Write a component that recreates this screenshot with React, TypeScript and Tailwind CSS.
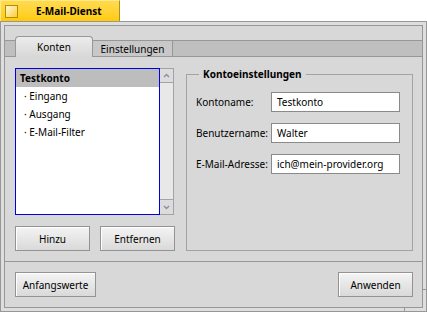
import { ReactNode } from "react";

// Small chevron used in the list's scrollbar buttons
const Arrow = ({ up }: { up?: boolean }) => (
  <svg width="7" height="5" viewBox="0 0 7 5" className={up ? "" : "rotate-180"}>
    <path d="M1 4 L3.5 1.5 L6 4" fill="none" stroke="#8590a6" strokeWidth="1.4" />
  </svg>
);

const Button = ({ children, className }: { children: ReactNode; className: string }) => (
  <button
    className={`${className} h-[25px] border border-[#939393] bg-linear-to-b from-[#f4f4f4] to-[#d9d9d9] shadow-[inset_1px_1px_0_#ffffff] text-[10px] leading-none text-black`}
  >
    {children}
  </button>
);

const Field = ({ label, value }: { label: string; value: string }) => (
  <div className="flex h-[20px] items-center">
    <span className="w-[75px]">{label}</span>
    <div className="flex h-[20px] w-[129px] items-center border border-[#8a8a8a] bg-white pl-[5px]">{value}</div>
  </div>
);

export default function App() {
  return (
    <div className="h-[312px] w-[427px] bg-white font-['Noto_Sans',sans-serif] text-[10px] leading-none text-black">
      {/* Title tab */}
      <div className="flex h-[21px] w-[120px] items-center border-x border-t border-l-[#ffe98a] border-t-[#ffe98a] border-r-[#a88d2c] bg-linear-to-b from-[#ffdb4d] to-[#ffcb00] pl-[4px]">
        <div className="h-[13px] w-[13px] border border-[#b38f00] bg-linear-to-br from-[#fff8d6] to-[#ffcb00]" />
        <span className="ml-[18px] font-bold">E-Mail-Dienst</span>
      </div>

      {/* Window frame */}
      <div className="relative h-[291px] border border-[#979797] bg-[#dedede] p-[3px]">
        <div className="flex h-full flex-col border border-[#979797] bg-[#d8d8d8]">
          <div className="h-[14px] shrink-0" />

          {/* Tab bar */}
          <div className="flex h-[17px] shrink-0 border-y border-[#979797] bg-[#bfbfbf] pl-[10px]">
            <div className="-mt-[5px] flex h-[21px] w-[78px] items-center justify-center rounded-t-[4px] border-x border-t border-[#979797] bg-linear-to-b from-[#ececec] to-[#d8d8d8]">
              Konten
            </div>
            <div className="flex h-[15px] w-[80px] items-center justify-center border-r border-[#979797] bg-[#c8c8c8]">
              Einstellungen
            </div>
          </div>

          {/* Tab content */}
          <div className="flex h-[205px] shrink-0 border-b border-[#979797] pl-[10px] pt-[11px]">
            <div className="flex w-[160px] flex-col">
              <div className="flex h-[147px]">
                <div className="w-[145px] border border-[#0000e0] bg-white">
                  <div className="flex h-[18px] items-center bg-[#bdbdbd] pl-[4px] font-bold">Testkonto</div>
                  <div className="flex h-[18px] items-center pl-[8px]">· Eingang</div>
                  <div className="flex h-[18px] items-center pl-[8px]">· Ausgang</div>
                  <div className="flex h-[18px] items-center pl-[8px]">· E-Mail-Filter</div>
                </div>
                <div className="flex w-[14px] flex-col justify-between border-y border-r border-[#a3a3a3] bg-[#e8e8e8]">
                  <div className="flex h-[14px] items-center justify-center border-b border-[#a3a3a3] bg-[#dcdcdc]">
                    <Arrow up />
                  </div>
                  <div className="flex h-[15px] items-center justify-center border-t border-[#a3a3a3] bg-[#dcdcdc]">
                    <Arrow />
                  </div>
                </div>
              </div>
              <div className="mt-[11px] flex gap-[10px]">
                <Button className="w-[75px]">Hinzu</Button>
                <Button className="w-[75px]">Entfernen</Button>
              </div>
            </div>

            <fieldset className="-mt-[1px] ml-[11px] h-[184px] w-[227px] border border-[#a3a3a3] pl-[9px]">
              <legend className="ml-[3px] px-[4px] font-bold leading-[14px]">Kontoeinstellungen</legend>
              <div className="mt-[11px] flex flex-col gap-[11px]">
                <Field label="Kontoname:" value="Testkonto" />
                <Field label="Benutzername:" value="Walter" />
                <Field label="E-Mail-Adresse:" value="ich@mein-provider.org" />
              </div>
            </fieldset>
          </div>

          {/* Bottom buttons */}
          <div className="flex flex-1 justify-between pl-[10px] pr-[9px] pt-[10px]">
            <Button className="w-[81px]">Anfangswerte</Button>
            <Button className="w-[75px]">Anwenden</Button>
          </div>
        </div>

        {/* resize corner marks */}
        <div className="absolute bottom-0 left-[403px] h-[4px] w-px bg-[#979797]" />
        <div className="absolute right-0 top-[267px] h-px w-[4px] bg-[#979797]" />
      </div>
    </div>
  );
}
